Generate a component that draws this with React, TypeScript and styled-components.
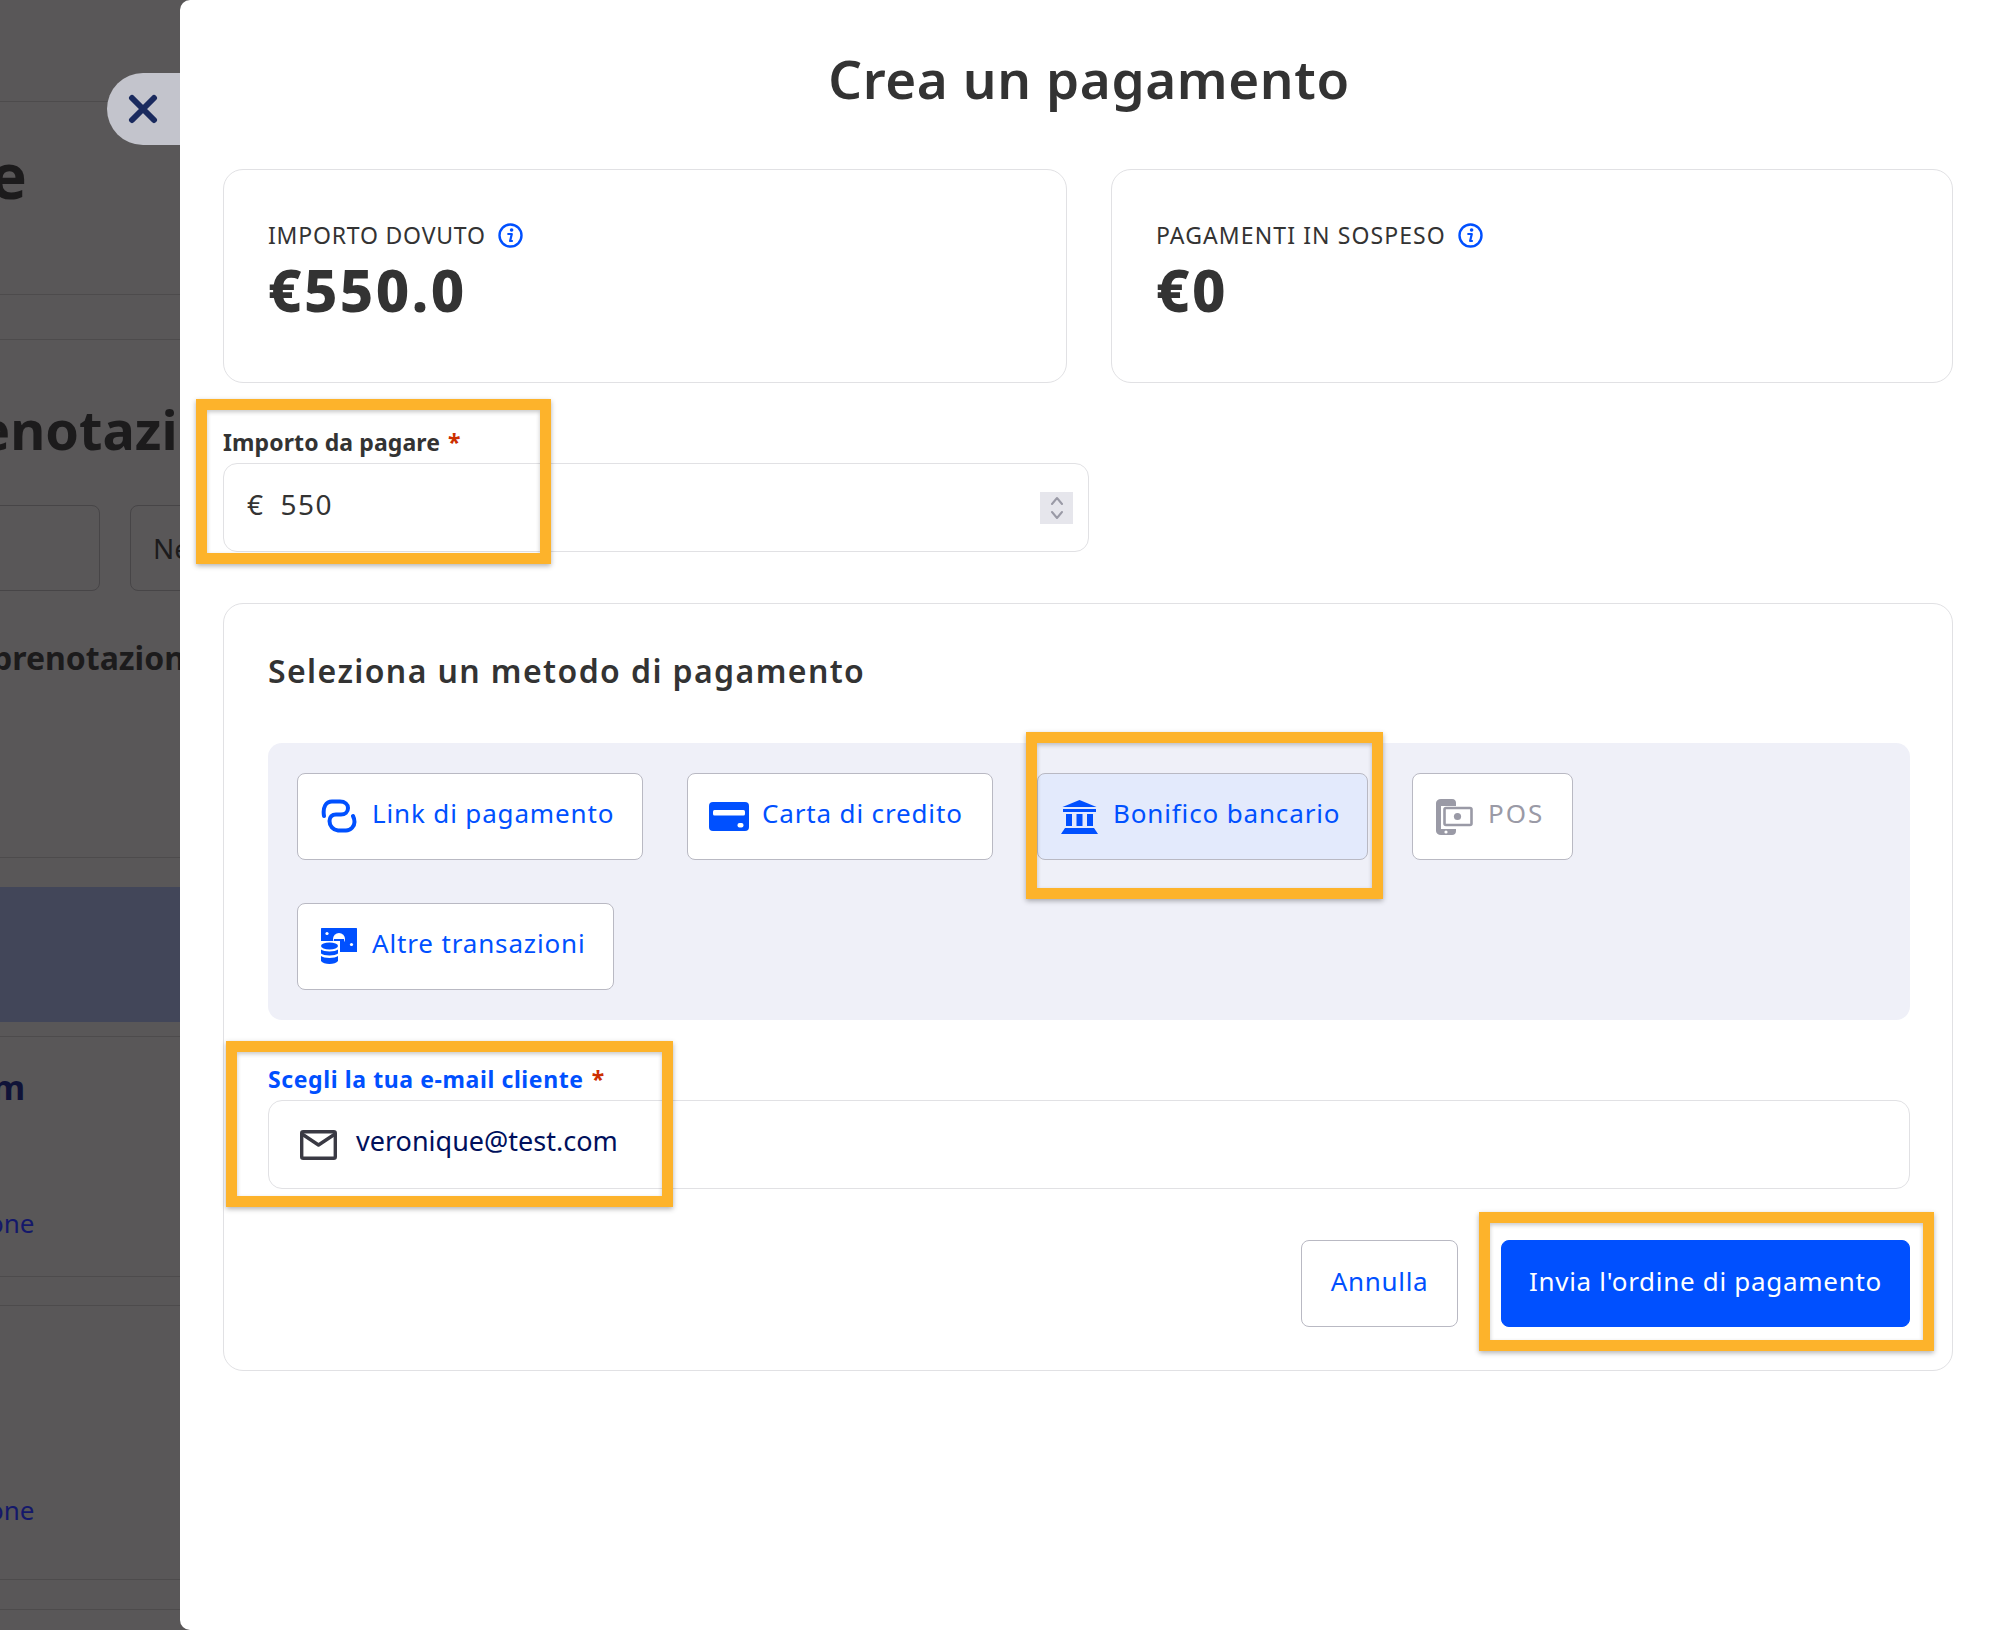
import React from 'react';
import styled, { createGlobalStyle } from 'styled-components';

const GlobalStyle = createGlobalStyle`
  html, body {
    margin: 0;
    padding: 0;
    background: #595758;
  }
  * {
    box-sizing: border-box;
  }
`;

const Page = styled.div`
  position: relative;
  display: flex;
  width: 1998px;
  height: 1630px;
  overflow: hidden;
  background: #595758;
  font-family: 'Noto Sans', 'Liberation Sans', sans-serif;
`;

/* dimmed page behind the modal */
const Backdrop = styled.div`
  flex: 0 0 180px;
  display: flex;
  flex-direction: column;
  overflow: hidden;
`;

const BackRow = styled.div<{ $h: number; $line?: boolean; $bg?: string; $pt?: number; $pb?: number }>`
  flex: 0 0 ${(p) => p.$h}px;
  padding: ${(p) => p.$pt || 0}px 0 ${(p) => p.$pb || 0}px;
  display: flex;
  align-items: center;
  overflow: hidden;
  white-space: nowrap;
  background: ${(p) => p.$bg || 'transparent'};
  border-bottom: ${(p) => (p.$line ? '1px solid #4d4b4c' : 'none')};
`;

const BackText = styled.span<{ $size: number; $shift: number; $color?: string; $weight?: number }>`
  margin-left: ${(p) => p.$shift}px;
  font-size: ${(p) => p.$size}px;
  font-weight: ${(p) => p.$weight || 700};
  color: ${(p) => p.$color || '#1c1b1c'};
`;

const BackInputs = styled.div`
  display: flex;
  gap: 30px;
  margin-left: -60px;
`;

const BackInput = styled.div<{ $w: number }>`
  flex: 0 0 ${(p) => p.$w}px;
  height: 86px;
  padding-left: 22px;
  display: flex;
  align-items: center;
  border: 1px solid #474547;
  border-radius: 8px;
  font-size: 28px;
  color: #1c1b1c;
`;

const CloseTab = styled.div`
  position: absolute;
  left: 107px;
  top: 73px;
  width: 90px;
  height: 72px;
  padding-left: 21px;
  display: flex;
  align-items: center;
  background: #c3c4cc;
  border-radius: 36px 0 0 36px;
`;

const Modal = styled.div`
  position: relative;
  flex: 1;
  padding: 0 45px 0 43px;
  background: #fff;
  border-radius: 10px 0 0 10px;
`;

const Title = styled.h1`
  margin: 0;
  height: 169px;
  padding: 0 0 12px 2px;
  display: flex;
  align-items: center;
  justify-content: center;
  font-size: 53px;
  font-weight: 600;
  letter-spacing: 0.6px;
  color: #333;
`;

const Summary = styled.div`
  display: grid;
  grid-template-columns: 844px 842px;
  gap: 44px;
`;

const SummaryCard = styled.div`
  height: 214px;
  padding: 49px 44px 0;
  border: 1px solid #e1e1e4;
  border-radius: 20px;
`;

const SummaryLabel = styled.div<{ $spacing: number }>`
  display: flex;
  align-items: center;
  gap: 12px;
  height: 32px;
  font-size: 23px;
  letter-spacing: ${(p) => p.$spacing}px;
  color: #333;
`;

const SummaryValue = styled.div`
  margin-top: 5px;
  font-size: 58px;
  line-height: 68px;
  font-weight: 800;
  letter-spacing: 2.4px;
  color: #333;
`;

const FieldLabel = styled.div<{ $active?: boolean }>`
  height: 30px;
  margin: 45px 0 5px;
  padding-bottom: 2px;
  font-size: 23px;
  line-height: 28px;
  font-weight: 700;
  letter-spacing: ${(p) => (p.$active ? 0.6 : 0.1)}px;
  color: ${(p) => (p.$active ? '#0050ff' : '#333')};
`;

const Star = styled.span`
  margin-left: 8px;
  color: #cc2f00;
`;

const InputBox = styled.div<{ $w?: number }>`
  width: ${(p) => (p.$w ? `${p.$w}px` : '100%')};
  height: 89px;
  display: flex;
  align-items: center;
  border: 1px solid #e1e1e4;
  border-radius: 14px;
`;

const AmountInput = styled(InputBox)`
  padding: 0 15px 7px 23px;
  font-size: 28px;
  letter-spacing: 1.5px;
  color: #333;
`;

const Currency = styled.span`
  margin-right: 16px;
`;

const Spinner = styled.div`
  margin-left: auto;
  margin-top: 7px;
  width: 33px;
  height: 32px;
  background: #e6e6ec;
  display: flex;
  align-items: center;
  justify-content: center;
`;

const MethodCard = styled.div`
  margin-top: 51px;
  padding: 0 42px 43px 44px;
  border: 1px solid #e1e1e4;
  border-radius: 20px;
`;

const MethodTitle = styled.h2`
  margin: 0 0 54px;
  padding-top: 49px;
  font-size: 32px;
  line-height: 36px;
  font-weight: 600;
  letter-spacing: 1.4px;
  color: #333;
`;

const MethodPanel = styled.div`
  display: flex;
  flex-wrap: wrap;
  gap: 43px 44px;
  padding: 30px 30px 30px 29px;
  background: #eff0f8;
  border-radius: 14px;
`;

const MethodButton = styled.div<{ $w: number; $selected?: boolean; $disabled?: boolean; $inset?: number; $gap?: number }>`
  width: ${(p) => p.$w}px;
  height: 87px;
  padding: 0 0 8px ${(p) => p.$inset || 23}px;
  display: flex;
  align-items: center;
  gap: ${(p) => p.$gap || 15}px;
  white-space: nowrap;
  font-size: 26px;
  letter-spacing: ${(p) => (p.$disabled ? 2 : 0.85)}px;
  color: ${(p) => (p.$disabled ? '#9a9aa6' : '#0050ff')};
  background: ${(p) => (p.$selected ? '#e3eafc' : '#fff')};
  border: 1px solid #b9b9c3;
  border-radius: 8px;

  svg {
    flex: none;
    margin-top: 8px;
  }
`;

const EmailInput = styled(InputBox)`
  padding: 0 0 8px 31px;
  gap: 19px;
  font-size: 27px;
  color: #00105c;

  svg {
    margin-top: 8px;
  }
`;

const Actions = styled.div`
  margin-top: 51px;
  display: flex;
  justify-content: flex-end;
  gap: 43px;
`;

const ActionButton = styled.div<{ $primary?: boolean; $w: number }>`
  width: ${(p) => p.$w}px;
  height: 87px;
  padding-bottom: 6px;
  display: flex;
  align-items: center;
  justify-content: center;
  font-size: 26px;
  letter-spacing: 0.7px;
  color: ${(p) => (p.$primary ? '#fff' : '#0050ff')};
  background: ${(p) => (p.$primary ? '#0050ff' : '#fff')};
  border: 1px solid ${(p) => (p.$primary ? '#0050ff' : '#b9b9c3')};
  border-radius: 8px;
`;

/* orange callouts drawn on top of the screenshot */
const Callout = styled.div<{ $x: number; $y: number; $w: number; $h: number }>`
  position: absolute;
  left: ${(p) => p.$x}px;
  top: ${(p) => p.$y}px;
  width: ${(p) => p.$w}px;
  height: ${(p) => p.$h}px;
  border: 11px solid #fdb32b;
  box-shadow: 0 2px 5px rgba(0, 0, 0, 0.3), inset 0 2px 4px rgba(0, 0, 0, 0.22);
  pointer-events: none;
`;

const CloseIcon = () => (
  <svg width="30" height="30" viewBox="0 0 30 30" fill="none" stroke="#1a2a5e" strokeWidth="6" strokeLinecap="round">
    <path d="M4 4L26 26M26 4L4 26" />
  </svg>
);

const InfoIcon = () => (
  <svg width="25" height="25" viewBox="0 0 25 25" fill="none">
    <circle cx="12.5" cy="12.5" r="11" stroke="#0050ff" strokeWidth="2.4" />
    <circle cx="13.6" cy="7" r="1.8" fill="#0050ff" />
    <path d="M10.2 11h3.6l-1.7 7h1.9" stroke="#0050ff" strokeWidth="2.2" strokeLinecap="round" strokeLinejoin="round" />
  </svg>
);

const LinkIcon = () => (
  <svg width="36" height="36" viewBox="0 0 36 36" fill="none" stroke="#0050ff" strokeWidth="4" strokeLinecap="round">
    <path d="M3 17C1.5 8 5 2.5 11 2.5H19C24 2.5 27 5.5 27 9C27 13 24 15.5 20 15.5H15C11 15.5 8.5 18 8.5 22C8.5 27 12 31 17 31.5H25C30 31.5 33.5 27 33.5 23C33.5 21 33 19 32 17" />
  </svg>
);

const CardIcon = () => (
  <svg width="40" height="29" viewBox="0 0 40 29">
    <rect width="40" height="29" rx="4" fill="#0050ff" />
    <rect x="4" y="8" width="32" height="5.5" rx="1.5" fill="#fff" />
    <rect x="28.5" y="21" width="6" height="4.5" rx="2" fill="#fff" />
  </svg>
);

const BankIcon = () => (
  <svg width="37" height="34" viewBox="0 0 37 34" fill="#0050ff">
    <path d="M18.5 0L35.5 7H1.5Z" />
    <rect x="2" y="9" width="33" height="3" />
    <rect x="5" y="14" width="6" height="12" />
    <rect x="15.5" y="14" width="6" height="12" />
    <rect x="26" y="14" width="6" height="12" />
    <path d="M4 28H33L37 34H0Z" />
  </svg>
);

const PosIcon = () => (
  <svg width="37" height="36" viewBox="0 0 37 36">
    <path d="M5 0H16C19 0 20 2 20 4V7H5V30H20V32C20 34.5 18.5 36 16 36H5C2 36 0 34 0 32V4C0 2 2 0 5 0Z" fill="#9a9aa6" />
    <circle cx="10" cy="33" r="1.6" fill="#fff" />
    <rect x="8.5" y="9" width="27" height="17" rx="1.5" fill="#fff" stroke="#9a9aa6" strokeWidth="2.6" />
    <circle cx="21.5" cy="17.5" r="3.6" fill="#9a9aa6" />
  </svg>
);

const TransferIcon = () => (
  <svg width="36" height="37" viewBox="0 0 36 37">
    <rect width="36" height="24" rx="0.5" fill="#0050ff" />
    <circle cx="18" cy="11" r="6" fill="#fff" />
    <rect x="13" y="11" width="10" height="13" fill="#0050ff" />
    <circle cx="6" cy="5.5" r="1.6" fill="#fff" />
    <circle cx="30.5" cy="16.5" r="1.6" fill="#fff" />
    <rect x="-1" y="13" width="20" height="24" fill="#fff" />
    <ellipse cx="8.5" cy="18" rx="8.5" ry="3.4" fill="#0050ff" />
    <path d="M0 21.5C2.5 24 14.5 24 17 21.5V25.5C14.5 28 2.5 28 0 25.5Z" fill="#0050ff" />
    <path d="M0 28C2.5 30.5 14.5 30.5 17 28V33C14.5 37 2.5 37 0 33Z" fill="#0050ff" />
  </svg>
);

const MailIcon = () => (
  <svg width="37" height="30" viewBox="0 0 37 30" fill="none" stroke="#3a3a44" strokeWidth="3.4" strokeLinejoin="round">
    <rect x="1.7" y="1.7" width="33.6" height="26.6" rx="1.5" />
    <path d="M2 4L18.5 15L35 4" />
  </svg>
);

const SpinnerIcon = () => (
  <svg width="14" height="26" viewBox="0 0 14 26" fill="none" stroke="#9a9aa6" strokeWidth="2" strokeLinecap="round" strokeLinejoin="round">
    <path d="M2 9L7 3L12 9M2 17L7 23L12 17" />
  </svg>
);

const App: React.FC = () => {
  return (
    <Page>
      <GlobalStyle />
      <Backdrop>
        <BackRow $h={102} $line />
        <BackRow $h={193} $line $pb={46}>
          <BackText $size={62} $shift={-10}>e</BackText>
        </BackRow>
        <BackRow $h={45} $line />
        <BackRow $h={165} $pt={12}>
          <BackText $size={54} $shift={-22}>enotazi</BackText>
        </BackRow>
        <BackRow $h={86}>
          <BackInputs>
            <BackInput $w={160} />
            <BackInput $w={200}>Ne</BackInput>
          </BackInputs>
        </BackRow>
        <BackRow $h={267} $line $pb={133}>
          <BackText $size={32} $shift={-8}>prenotazioni</BackText>
        </BackRow>
        <BackRow $h={29} />
        <BackRow $h={135} $bg="#424659" />
        <BackRow $h={15} $line />
        <BackRow $h={100}>
          <BackText $size={34} $shift={-8} $color="#101338">m</BackText>
        </BackRow>
        <BackRow $h={140} $line $pt={32}>
          <BackText $size={26} $shift={-12} $color="#14186a" $weight={400}>one</BackText>
        </BackRow>
        <BackRow $h={29} $line />
        <BackRow $h={274} $line $pt={134}>
          <BackText $size={26} $shift={-12} $color="#14186a" $weight={400}>one</BackText>
        </BackRow>
        <BackRow $h={30} $line />
      </Backdrop>

      <CloseTab>
        <CloseIcon />
      </CloseTab>

      <Modal>
        <Title>Crea un pagamento</Title>

        <Summary>
          <SummaryCard>
            <SummaryLabel $spacing={0.8}>
              IMPORTO DOVUTO
              <InfoIcon />
            </SummaryLabel>
            <SummaryValue>€550.0</SummaryValue>
          </SummaryCard>
          <SummaryCard>
            <SummaryLabel $spacing={1.1}>
              PAGAMENTI IN SOSPESO
              <InfoIcon />
            </SummaryLabel>
            <SummaryValue>€0</SummaryValue>
          </SummaryCard>
        </Summary>

        <FieldLabel>
          Importo da pagare<Star>*</Star>
        </FieldLabel>
        <AmountInput $w={866}>
          <Currency>€</Currency>
          550
          <Spinner>
            <SpinnerIcon />
          </Spinner>
        </AmountInput>

        <MethodCard>
          <MethodTitle>Seleziona un metodo di pagamento</MethodTitle>
          <MethodPanel>
            <MethodButton $w={346}>
              <LinkIcon />
              Link di pagamento
            </MethodButton>
            <MethodButton $w={306} $inset={21} $gap={13}>
              <CardIcon />
              Carta di credito
            </MethodButton>
            <MethodButton $w={331} $selected>
              <BankIcon />
              Bonifico bancario
            </MethodButton>
            <MethodButton $w={161} $disabled>
              <PosIcon />
              POS
            </MethodButton>
            <MethodButton $w={317}>
              <TransferIcon />
              Altre transazioni
            </MethodButton>
          </MethodPanel>

          <FieldLabel $active>
            Scegli la tua e-mail cliente<Star>*</Star>
          </FieldLabel>
          <EmailInput>
            <MailIcon />
            veronique@test.com
          </EmailInput>

          <Actions>
            <ActionButton $w={157}>Annulla</ActionButton>
            <ActionButton $w={409} $primary>
              Invia l'ordine di pagamento
            </ActionButton>
          </Actions>
        </MethodCard>
      </Modal>

      <Callout $x={196} $y={399} $w={355} $h={165} />
      <Callout $x={1026} $y={732} $w={357} $h={167} />
      <Callout $x={226} $y={1041} $w={447} $h={166} />
      <Callout $x={1479} $y={1212} $w={455} $h={139} />
    </Page>
  );
};

export default App;
